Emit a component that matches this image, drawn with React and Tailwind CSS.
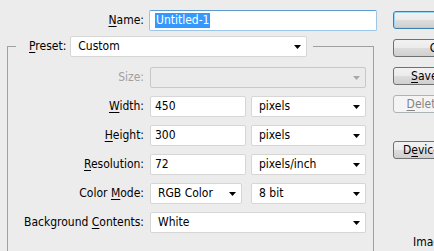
import React from "react";

function Arrow({ gray }) {
  return (
    <svg width="7" height="4" viewBox="0 0 7 4" className="shrink-0">
      <path d="M0 0H7L3.5 4Z" fill={gray ? "#a8a8a8" : "#000"} />
    </svg>
  );
}

function Select({ w, text, disabled }) {
  return (
    <div
      className={`${w} h-[21px] rounded-[2px] border flex items-center justify-between pl-[7px] pr-[5px] ${
        disabled ? "bg-[#ebebeb] border-[#c8c8c8]" : "bg-white border-[#d6d6d6]"
      }`}
    >
      <span>{text}</span>
      <Arrow gray={disabled} />
    </div>
  );
}

function Input({ text }) {
  return (
    <div className="w-[96px] h-[21px] rounded-[2px] border border-[#d6d6d6] bg-white flex items-center pl-[4px]">
      {text}
    </div>
  );
}

function Row({ label, children }) {
  return (
    <div className="flex items-center h-[21px] mb-[8px]">
      <div className="w-[136px] text-right whitespace-nowrap">{label}</div>
      <div className="ml-[6px] flex items-center gap-[5px]">{children}</div>
    </div>
  );
}

function Btn({ children, variant }) {
  const base =
    "w-[110px] h-[18px] shrink-0 rounded-[3px] border flex items-center justify-center whitespace-nowrap";
  if (variant === "default")
    return (
      <div
        className={`${base} border-[#3c7fb1] shadow-[inset_0_0_0_1px_#9ad6f7] bg-[linear-gradient(to_bottom,#f2f2f2_0%,#ebebeb_50%,#dddddd_50%,#cfcfcf_100%)]`}
      >
        {children}
      </div>
    );
  if (variant === "disabled")
    return (
      <div className={`${base} border-[#adb2b5] bg-[#f4f4f4] text-[#838383]`}>{children}</div>
    );
  return (
    <div
      className={`${base} border-[#707070] bg-[linear-gradient(to_bottom,#f2f2f2_0%,#ebebeb_50%,#dddddd_50%,#cfcfcf_100%)]`}
    >
      {children}
    </div>
  );
}

const U = ({ children }) => <span className="underline underline-offset-[2px]">{children}</span>;

export default function App() {
  return (
    <div className="w-[434px] h-[251px] overflow-hidden bg-[#ececec] flex text-[12px] leading-[15px] text-black font-['DejaVu_Sans_Condensed','DejaVu_Sans',sans-serif]">
      <div className="w-[393px] shrink-0 flex flex-col">
        <div className="flex items-center mt-[10px] h-[21px]">
          <div className="w-[144px] text-right">
            <U>N</U>ame:
          </div>
          <div className="ml-[5px] w-[228px] h-[21px] bg-white border border-[#9cc5ea] border-t-[#5e9bd0] rounded-[2px] flex items-center pl-[5px]">
            <span className="bg-[#3399ff] text-white px-[1px] leading-[15px]">Untitled-1</span>
          </div>
        </div>
        <fieldset className="mt-[5px] ml-[7px] w-[367px] border border-b-0 border-[#a0a0a0] pt-[10px] pb-[40px] m-0 p-0">
          <legend className="ml-[8px] pl-[13px] pr-[6px] flex items-center">
            <span className="mr-[4px]">
              <U>P</U>reset:
            </span>
            <Select w="w-[237px]" text="Custom" />
          </legend>
          <Row label={<span className="text-[#a0a0a0]">Size:</span>}>
            <Select w="w-[216px]" text="" disabled />
          </Row>
          <Row
            label={
              <>
                <U>W</U>idth:
              </>
            }
          >
            <Input text="450" />
            <Select w="w-[115px]" text="pixels" />
          </Row>
          <Row
            label={
              <>
                <U>H</U>eight:
              </>
            }
          >
            <Input text="300" />
            <Select w="w-[115px]" text="pixels" />
          </Row>
          <Row
            label={
              <>
                <U>R</U>esolution:
              </>
            }
          >
            <Input text="72" />
            <Select w="w-[115px]" text="pixels/inch" />
          </Row>
          <Row
            label={
              <>
                Color <U>M</U>ode:
              </>
            }
          >
            <div className="flex items-center gap-[9px]">
              <Select w="w-[92px]" text="RGB Color" />
              <Select w="w-[115px]" text="8 bit" />
            </div>
          </Row>
          <Row
            label={
              <>
                Background <U>C</U>ontents:
              </>
            }
          >
            <Select w="w-[216px]" text="White" />
          </Row>
        </fieldset>
      </div>
      <div className="flex flex-col pt-[11px] gap-[10px]">
        <Btn variant="default">OK</Btn>
        <Btn>Cancel</Btn>
        <Btn>
          <U>S</U>ave Preset...
        </Btn>
        <Btn variant="disabled">
          <U>D</U>elete Preset...
        </Btn>
        <div className="mt-[18px]">
          <Btn>
            D<U>e</U>vice Central...
          </Btn>
        </div>
        <div className="mt-[66px] pl-[20px] whitespace-nowrap">Image Size:</div>
      </div>
    </div>
  );
}
